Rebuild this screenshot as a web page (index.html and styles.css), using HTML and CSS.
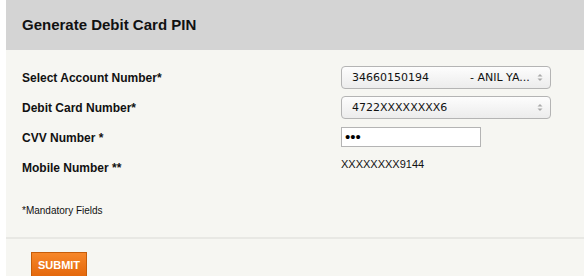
FILE: index.html
```html
<!DOCTYPE html>
<html lang="en">
<head>
<meta charset="UTF-8">
<title>Generate Debit Card PIN</title>
<link rel="stylesheet" href="styles.css">
</head>
<body>
<div class="panel">
  <div class="panel-head">Generate Debit Card PIN</div>
  <div class="form-body">
    <div class="row">
      <label class="lbl">Select Account Number*</label>
      <div class="sel">
        <span class="sel-text">34660150194</span>
        <span class="sel-name">- ANIL YA...</span>
        <svg class="arrows" width="6" height="9" viewBox="0 0 6 9"><path d="M0.5 3.5 L3 1 L5.5 3.5 Z" fill="#aaa"/><path d="M0.5 5.5 L3 8 L5.5 5.5 Z" fill="#aaa"/></svg>
      </div>
    </div>
    <div class="row">
      <label class="lbl">Debit Card Number*</label>
      <div class="sel">
        <span class="sel-text">4722XXXXXXXX6</span>
        <svg class="arrows" width="6" height="9" viewBox="0 0 6 9"><path d="M0.5 3.5 L3 1 L5.5 3.5 Z" fill="#aaa"/><path d="M0.5 5.5 L3 8 L5.5 5.5 Z" fill="#aaa"/></svg>
      </div>
    </div>
    <div class="row">
      <label class="lbl">CVV Number *</label>
      <input class="cvv" type="password" value="123">
    </div>
    <div class="row">
      <label class="lbl">Mobile Number **</label>
      <span class="mobile">XXXXXXXX9144</span>
    </div>
    <p class="note">*Mandatory Fields</p>
  </div>
  <div class="actions">
    <button class="btn">SUBMIT</button>
  </div>
</div>
</body>
</html>
```

FILE: styles.css
```css
body {
  margin: 0;
  background: #fff;
  font-family: "Liberation Sans", Arial, sans-serif;
  color: #111;
}
.panel {
  margin-left: 6px;
  width: 578px;
  height: 276px;
  background: #f6f6f2;
}
.panel-head {
  height: 50px;
  background: #d4d4d4;
  padding-left: 16px;
  font-size: 15px;
  font-weight: bold;
  line-height: 50px;
}
.form-body {
  padding: 13px 0 0 16px;
  border-bottom: 2px solid #e8e8e4;
}
.row {
  display: flex;
  align-items: center;
  height: 30px;
}
.lbl {
  width: 319px;
  font-size: 12px;
  font-weight: bold;
}
.sel {
  position: relative;
  display: flex;
  align-items: center;
  box-sizing: border-box;
  width: 210px;
  height: 23px;
  margin-top: -2px;
  padding-left: 10px;
  border: 1px solid #b4b4b4;
  border-radius: 4px;
  background: linear-gradient(#fdfdfd, #ececec);
  font-family: "DejaVu Sans", Verdana, sans-serif;
  font-size: 11px;
}
.sel-text {
  width: 118px;
}
.arrows {
  position: absolute;
  right: 7px;
  top: 6px;
}
.cvv {
  box-sizing: border-box;
  width: 140px;
  height: 20px;
  margin: -3px 0 0 0;
  padding: 0 3px;
  border: 1px solid #b4b4b4;
  background: #fff;
  font-size: 15px;
  letter-spacing: 0;
}
.mobile {
  font-size: 11px;
  margin-top: -8px;
}
.note {
  margin: 0;
  padding: 22px 0 20px;
  font-size: 10px;
  line-height: 12px;
}
.actions {
  padding: 13px 0 0 25px;
}
.btn {
  width: 56px;
  height: 25px;
  border: 1px solid #c65d0a;
  background: linear-gradient(#f7872a, #e4680c);
  color: #fff;
  font-family: "Liberation Sans", Arial, sans-serif;
  font-size: 11px;
  font-weight: bold;
  padding: 0;
}
```
